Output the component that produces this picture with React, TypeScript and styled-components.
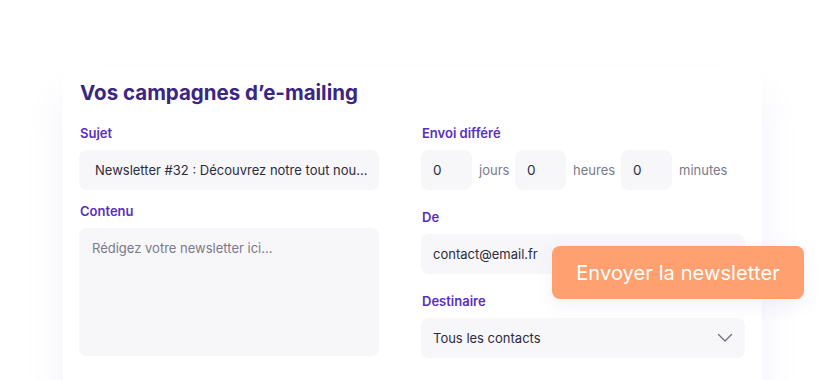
import React from "react";
import styled, { createGlobalStyle } from "styled-components";

const Global = createGlobalStyle`
  html, body { margin: 0; padding: 0; background: #ffffff; }
  body { font-family: Inter, "Noto Sans", "Liberation Sans", sans-serif; }
  * { box-sizing: border-box; }
`;

const Stage = styled.div`
  position: relative;
  width: 824px;
  height: 380px;
  overflow: hidden;
  background: #ffffff;
  padding: 67px 0 0 63px;
`;

const Card = styled.section`
  width: 699px;
  height: 340px;
  background: #ffffff;
  border-radius: 10px;
  padding: 12px 17px 0 16px;
  box-shadow: 0 30px 40px rgba(90, 80, 190, 0.08);
`;

const Title = styled.h1`
  margin: 0 0 17px 1px;
  font-size: 20.5px;
  line-height: 28px;
  font-weight: 700;
  color: #3a2683;
`;

const Columns = styled.div`
  display: grid;
  grid-template-columns: 300px 324px;
  column-gap: 42px;
`;

const Column = styled.div`
  display: flex;
  flex-direction: column;
`;

const Group = styled.div<{ $gap: number }>`
  display: flex;
  flex-direction: column;
  gap: 8px;
  margin-bottom: ${(p) => p.$gap}px;
`;

const Label = styled.label`
  font-size: 13px;
  line-height: 18px;
  font-weight: 600;
  color: #5a2fbf;
  padding-left: 1px;
`;

const Field = styled.div<{ $pad?: number }>`
  height: 40px;
  background: #f7f7fa;
  border-radius: 8px;
  display: flex;
  align-items: center;
  padding: 0 ${(p) => p.$pad ?? 12}px;
  font-size: 13px;
  color: #2c2b3c;
  white-space: nowrap;
  overflow: hidden;
`;

const TextArea = styled.div`
  height: 128px;
  background: #f7f7fa;
  border-radius: 8px;
  padding: 11px 13px;
  font-size: 13px;
  line-height: 18px;
  color: #7b7a88;
`;

const DelayRow = styled.div`
  display: flex;
  align-items: center;
`;

const NumBox = styled.div`
  width: 51px;
  height: 40px;
  background: #f7f7fa;
  border-radius: 8px;
  display: flex;
  align-items: center;
  padding-left: 12px;
  font-size: 13.5px;
  color: #2c2b3c;
`;

const Unit = styled.span<{ $w: number }>`
  width: ${(p) => p.$w}px;
  padding-left: 7px;
  font-size: 13px;
  color: #7b7a88;
`;

const Select = styled(Field)`
  justify-content: space-between;
  padding-right: 12px;
`;

const SendButton = styled.button`
  position: absolute;
  left: 552px;
  top: 246px;
  width: 252px;
  height: 53px;
  border: none;
  border-radius: 8px;
  background: #ffa070;
  color: #ffffff;
  font-family: Inter, "Noto Sans", "Liberation Sans", sans-serif;
  font-size: 20px;
  font-weight: 400;
  letter-spacing: 0.1px;
  box-shadow: 0 6px 18px rgba(90, 80, 190, 0.08);
  cursor: pointer;
`;

const Chevron = () => (
  <svg width="16" height="10" viewBox="0 0 16 10" fill="none">
    <polyline points="1.5,1.5 8,8 14.5,1.5" stroke="#6f6e7c" strokeWidth="1.3" strokeLinecap="round" strokeLinejoin="round" />
  </svg>
);

export default function App() {
  return (
    <>
      <Global />
      <Stage>
        <Card>
          <Title>Vos campagnes d’e-mailing</Title>
          <Columns>
            <Column>
              <Group $gap={12}>
                <Label>Sujet</Label>
                <Field $pad={16}>Newsletter #32 : Découvrez notre tout nou...</Field>
              </Group>
              <Group $gap={0}>
                <Label>Contenu</Label>
                <TextArea>Rédigez votre newsletter ici...</TextArea>
              </Group>
            </Column>
            <Column>
              <Group $gap={18}>
                <Label>Envoi différé</Label>
                <DelayRow>
                  <NumBox>0</NumBox>
                  <Unit $w={43}>jours</Unit>
                  <NumBox>0</NumBox>
                  <Unit $w={55}>heures</Unit>
                  <NumBox>0</NumBox>
                  <Unit $w={60}>minutes</Unit>
                </DelayRow>
              </Group>
              <Group $gap={18}>
                <Label>De</Label>
                <Field>contact@email.fr</Field>
              </Group>
              <Group $gap={0}>
                <Label>Destinaire</Label>
                <Select>
                  <span>Tous les contacts</span>
                  <Chevron />
                </Select>
              </Group>
            </Column>
          </Columns>
        </Card>
        <SendButton>Envoyer la newsletter</SendButton>
      </Stage>
    </>
  );
}
